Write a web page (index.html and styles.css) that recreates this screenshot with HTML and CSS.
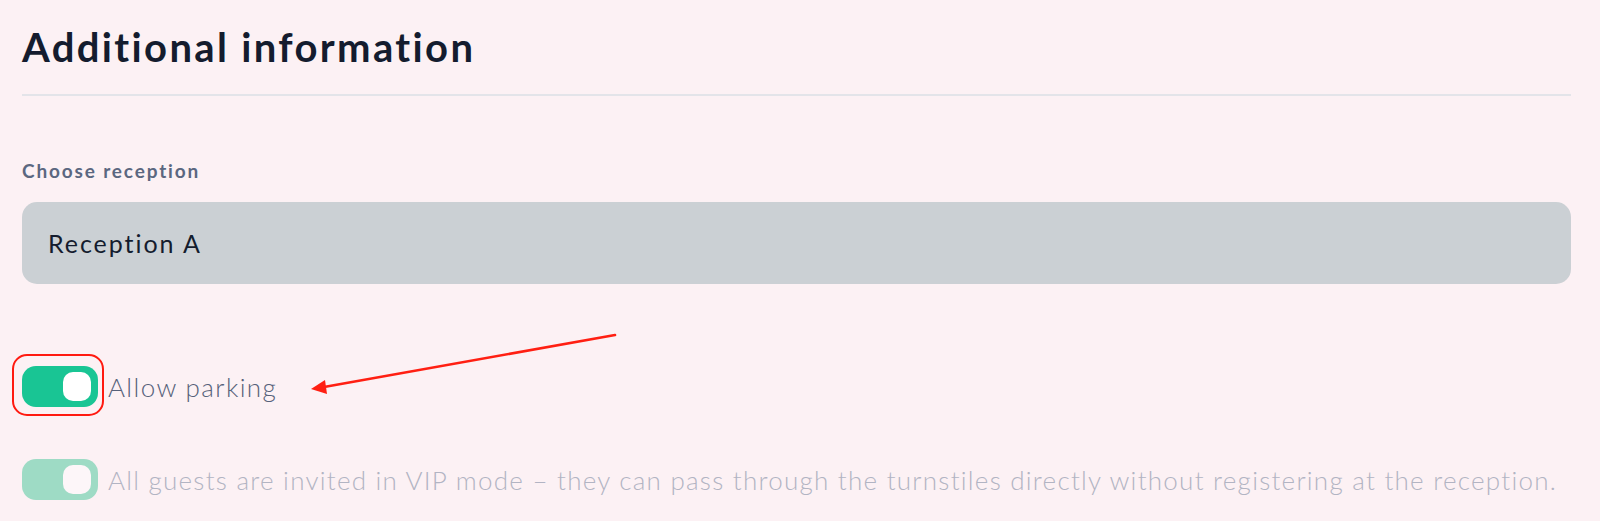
FILE: index.html
```html
<!DOCTYPE html>
<html lang="en">
<head>
<meta charset="utf-8">
<title>Additional information</title>
<link rel="stylesheet" href="styles.css">
</head>
<body>
<div class="page">
  <h1 class="title">Additional information</h1>
  <div class="field">
    <div class="label">Choose reception</div>
    <div class="select">Reception A</div>
  </div>
  <div class="option option-first">
    <span class="switch on">
      <span class="knob"></span>
      <span class="highlight"></span>
    </span>
    <span class="option-text">Allow parking</span>
  </div>
  <div class="option option-disabled">
    <span class="switch on disabled">
      <span class="knob"></span>
    </span>
    <span class="option-text">All guests are invited in VIP mode – they can pass through the turnstiles directly without registering at the reception.</span>
  </div>
  <svg class="arrow" width="1600" height="521" viewBox="0 0 1600 521" xmlns="http://www.w3.org/2000/svg">
    <line x1="615" y1="335" x2="324" y2="387" stroke="#ff1f12" stroke-width="2.6" stroke-linecap="round"/>
    <polygon points="311,389 325,380 327,394" fill="#ff1f12"/>
  </svg>
</div>
</body>
</html>
```
FILE: styles.css
```css
html, body {
  margin: 0;
  padding: 0;
  background: #fcf1f4;
}
body {
  font-family: Lato, "Noto Sans", sans-serif;
  color: #141c2e;
}
.page {
  position: relative;
  width: 1600px;
  height: 521px;
  box-sizing: border-box;
  padding: 0 29px 0 22px;
  overflow: hidden;
}
.title {
  margin: 0;
  padding: 24px 0 24px;
  font-size: 40px;
  line-height: 46px;
  font-weight: 700;
  letter-spacing: 2.35px;
  color: #141c2e;
  border-bottom: 2px solid #e3e4e9;
}
.field {
  padding-top: 63px;
}
.label {
  font-size: 19px;
  line-height: 24px;
  font-weight: 700;
  letter-spacing: 1.85px;
  color: #5b6780;
}
.select {
  margin-top: 19px;
  height: 82px;
  box-sizing: border-box;
  padding: 0 26px;
  display: flex;
  align-items: center;
  background: #cbd0d4;
  border-radius: 15px;
  font-size: 25px;
  letter-spacing: 1.95px;
  color: #141c2e;
}
.option {
  display: flex;
  align-items: center;
  gap: 10px;
}
.option-first {
  margin-top: 82px;
}
.option-disabled {
  margin-top: 52px;
}
.switch {
  position: relative;
  flex: none;
  width: 76px;
  height: 41px;
  box-sizing: border-box;
  padding: 6px 7px 6px 0;
  display: flex;
  justify-content: flex-end;
  border-radius: 14px;
  background: #19c594;
}
.switch.disabled {
  background: #9edbc5;
}
.knob {
  width: 28px;
  height: 29px;
  border-radius: 10px;
  background: #ffffff;
}
.switch.disabled .knob {
  background: #fdf6f9;
}
.highlight {
  position: absolute;
  left: -10px;
  top: -12px;
  width: 92px;
  height: 62px;
  box-sizing: border-box;
  border: 2px solid #ff1a10;
  border-radius: 15px;
}
.option-text {
  font-size: 26px;
  font-weight: 300;
  letter-spacing: 1.4px;
  color: #56617a;
  white-space: nowrap;
}
.option-disabled .option-text {
  letter-spacing: 1.25px;
  color: #b2b4c3;
}
.arrow {
  position: absolute;
  left: 0;
  top: 0;
  pointer-events: none;
}
```
